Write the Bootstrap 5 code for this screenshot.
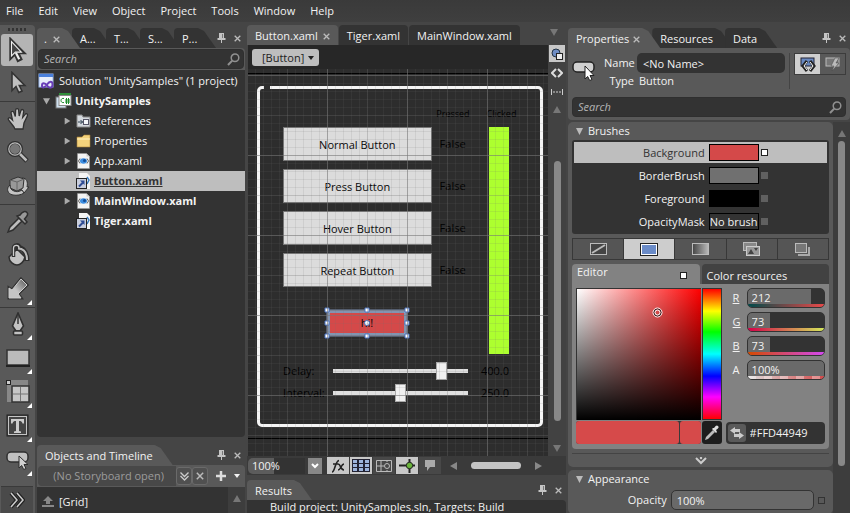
<!DOCTYPE html>
<html lang="en">
<head>
<meta charset="utf-8">
<meta name="viewport" content="width=device-width, initial-scale=1">
<title>UnitySamples</title>
<link href="https://cdn.jsdelivr.net/npm/bootstrap@5.3.0/dist/css/bootstrap.min.css" rel="stylesheet">
<style>
:root{--panel:#595959;--well:#333;--base:#454545;--lite:#bebebe}
body{font:11px/16px "Open Sans","Noto Sans",sans-serif;color:#f2f2f2;background:var(--base);height:100vh;overflow:hidden}
a{color:inherit;text-decoration:none}
button{font:inherit;color:inherit;background:none;border:0;padding:0}
input,select{font:inherit;color:inherit;min-width:0}
svg{display:block;flex:none}
.menubar{height:22px;background:linear-gradient(#3a3a3a,#3f3f3f);padding:0 6px;gap:15px}
.workspace{display:grid;grid-template-columns:35px minmax(0,208fr) minmax(0,319fr) minmax(0,282fr);column-gap:2px;min-height:0}
.workspace>*{min-width:0;min-height:0}
.dock{padding-top:6px}

/* tool strip */
.tools{background:var(--panel);margin-top:3px;border-radius:0 4px 0 0;overflow:hidden}
.grip{height:3px;margin:3px 8px 3px;background:repeating-linear-gradient(90deg,#333 0 2px,transparent 2px 4px)}
.tool{display:flex;align-items:center;justify-content:center;position:relative;height:34px;flex:none}
.tool.on{background:#b4b4b4;border-radius:3px;margin:0 2px 0 1px;height:32px}
.tool.sep{border-top:1px solid #3a3a3a;margin-top:1px}
.tool.more::after{content:"";position:absolute;right:3px;bottom:1px;border:solid transparent;border-width:0 0 5px 5px;border-bottom-color:#fff}
.tool.last{background:#4a4a4a;border-top:1px solid #3a3a3a;margin:9px 2px 0 1px;flex:1 1 auto;height:auto}

/* slanted tabs */
.tabs{height:20px}
.slant{height:20px;padding:2px 20px 0 8px;background:var(--well);border-radius:4px 0 0 0;clip-path:polygon(0 0,calc(100% - 18px) 0,calc(100% - 12px) 3px,100% 100%,0 100%);margin-right:-8px;white-space:nowrap}
.slant.on{background:var(--panel);position:relative;z-index:1}
.short{width:40px;padding-right:0;margin-right:-6px}
.short.dot{width:43px;margin-right:-8px;gap:6px;padding-left:7px}
.short.end{width:42px;margin:0}
.band{background:var(--panel);border-radius:0 4px 0 0;padding:1px}
.find{background:var(--well);border:1px solid #2f2f2f;border-radius:4px;height:20px;padding:0 3px 0 5px}
.find input,.plain{background:none;border:0;outline:0;padding:0;width:100%}
.find input{font-style:italic}
.find input::placeholder{color:#b5b5b5}
.tree{background:var(--well);border-radius:0 0 4px 4px;padding-top:1px}
.node{height:20px;display:flex;align-items:center;white-space:nowrap;gap:5px;padding-left:1px}
.node i{width:7px;height:7px;background:#aaa;clip-path:polygon(10% 0,90% 50%,10% 100%);flex:none}
.node i.down{clip-path:polygon(0 10%,100% 10%,50% 100%)}
.node i.none{visibility:hidden}
.node.top{padding-left:6px}
.node.lvl{padding-left:27px}
.node.top svg,.node.lvl svg{margin-right:-3px}
.node.sel{background:var(--lite);color:#333;text-decoration:underline}
.story{height:22px;padding:1px}
.story .field{background:#484848;border-radius:4px 0 0 4px;color:#9b9b9b;height:20px}
.story .mini{width:16px;height:18px;background:#505050;border:1px solid #6a6a6a;border-radius:3px;display:grid;place-items:center}
.objrow{height:26px;background:var(--well)}
.strip{flex:0 0 17px;background:#3d3d3d;display:flex;flex-direction:column;align-items:center}

/* document area */
.doctabs{padding-top:3px;gap:1px}
.doctab{height:20px;background:var(--well);border-radius:4px 4px 0 0;padding:2px 8px 0}
.doctab.on{background:var(--panel);gap:5px}
.page{padding-left:1px}
.crumbs{height:24px;background:#272727;padding:4px 4px}
.crumb{background:var(--lite);color:#222;border-radius:3px;height:17px;padding:0 5px 0 10px;line-height:16px}
.tri{border:4px solid transparent;border-width:4px 3px 0;border-top-color:currentColor;display:inline-block}
.tri.up{border-width:0 4px 7px;border-bottom-color:#777;border-top-color:transparent}
.tri.dn{border-width:7px 4px 0;border-top-color:#777}
.surface{position:relative;background:#2d2d2d;overflow:hidden;padding:0 5px 0 9px;color:#000}
.surface::after{content:"";position:absolute;inset:0;pointer-events:none;
background:
 repeating-linear-gradient(90deg,transparent 0 79px,rgba(120,120,120,.42) 79px 80px),
 linear-gradient(transparent 79px,rgba(120,120,120,.42) 79px) 0 7px/100% 80px,
 repeating-linear-gradient(90deg,transparent 0 39px,rgba(115,115,115,.2) 39px 40px),
 linear-gradient(transparent 39px,rgba(115,115,115,.2) 39px) 0 7px/100% 40px,
 repeating-linear-gradient(90deg,transparent 0 7px,rgba(110,110,110,.13) 7px 8px),
 linear-gradient(transparent 7px,rgba(110,110,110,.13) 7px) 0 -1px/100% 8px}
.edge{height:1px;background:#000;margin:0 -5px 0 -9px}
.board{position:relative;border:3px solid #f5f5f5;border-radius:5px;margin:12px 0 11px;padding:16px 18px 20px 23px}
.board::before{content:"";position:absolute;left:4px;top:-3px;width:6px;height:3px;background:#2d2d2d}
.heads{font-size:9px;line-height:18px;height:22px}
.heads span:first-child{width:36px;margin-right:5px;text-align:center}
.heads span:last-child{width:46px;text-align:center;padding-left:5px}
.demo{width:77%;height:34px;background:#dcdcdc;border:1px solid #777;color:#070707;line-height:34px}
.gauge{width:46px;padding:0 13px}
.gauge div{background:#adff2f}
.pick{position:relative;width:80px;height:26px;margin:23px 0 18px 44px;background:#d44949;border:3px solid #777;color:#070707;line-height:20px}
.pick svg{position:absolute;left:-6px;top:-6px}
.tunes{padding-top:6px}
.tune{height:22px}
.tune label{width:50px}
.tune output{width:54px;padding-left:13px}
.tune input{flex:1;appearance:none;-webkit-appearance:none;background:none;height:18px;margin:0}
.tune input::-webkit-slider-runnable-track{height:4px;background:#dfdfdf}
.tune input::-webkit-slider-thumb{-webkit-appearance:none;width:11px;height:18px;margin-top:-7px;background:#f0f0f0;border:1px solid #aaa}
.tune input::-moz-range-track{height:4px;background:#dfdfdf}
.side{width:18px;background:#424242}
.side .ic{width:16px;height:17px;display:grid;place-items:center;margin-bottom:2px}
.side .ic.on,.status .ic.on{background:#c8c8c8}
.vbar{width:7px;border-radius:4px;background:#888}
.status{height:19px;background:#3a3a3a;padding:1px 0 1px 1px;gap:1px}
.status .zoom{width:57px;height:16px;background:linear-gradient(90deg,#5c5c5c 26px,var(--well) 26px);border:0;border-radius:5px 0 0 5px;padding:0 4px}
.status .ic{width:22px;height:17px;display:grid;place-items:center;background:#484848}
.status .drop{width:14px;height:16px;background:#888;display:grid;place-items:center;margin:0 4px 0 2px}
.hbar{height:7px;border-radius:4px;background:#c4c4c4;flex:0 0 50px}
.results{margin-top:5px}
.log{background:var(--well);border-radius:0 4px 0 0;padding:0 0 0 23px;white-space:nowrap;height:13px;line-height:14px}

/* properties */
.props{background:var(--panel);border-radius:0 4px 4px 4px;padding:5px 4px 4px 4px;height:72px}
.namebox{background:var(--well);border:0;border-radius:5px;height:20px;padding:0 6px;width:0}
.typ{display:grid;grid-template-columns:30px 1fr;column-gap:3px}
.typ label,.typ span:nth-of-type(odd){text-align:right}
.typ div+span+div{padding-left:2px}
.vr2{width:1px;background:#444}
.duo{border:1px solid #3c3c3c;height:22px}
.duo button{width:25px;display:grid;place-items:center}
.duo .on{background:#cfcfcf}
.cats{margin-top:2px}
.catlist{flex:1 1 0;min-width:0}
.cat{background:var(--panel);border-radius:5px;padding:0 4px}
.cat+.cat{margin-top:3px;padding-bottom:4px}
.cat h2{font-size:11px;line-height:18px;font-weight:400;margin:0;padding-left:4px;gap:5px}
.brushes{background:var(--well);border-radius:3px;padding:2px 2px 0;height:94px}
.brow{display:grid;grid-template-columns:130fr 50px 64fr;column-gap:4px;align-items:center;height:23px;width:100%}
.brow span:first-child{text-align:right}
.brow.on{background:var(--lite);color:#333;height:21px;margin-bottom:1px}
.chip{height:17px;border:1px solid #000;line-height:15px;padding:0;white-space:nowrap;text-align:center}
.c-bg{background:#d44949}.c-bb{background:#707070}.c-fg{background:#000}
.dot7{width:7px;height:7px;background:#606060;margin-left:-2px}
.dot7.w{background:#fff;border:1px solid #222}
.dot7.o{background:none;border:1px solid #333;margin:0 4px 0 0}
.kinds{height:22px;border:1px solid #383838;margin:4px 0 4px}
.kinds button{flex:1;display:grid;place-items:center;background:#555}
.kinds button+button{border-left:1px solid #383838}
.kinds .on{background:#cdcdcd}
.etab{flex:1;height:20px;border-radius:4px 4px 0 0;padding:0 5px;white-space:nowrap}
.etab.on{background:#828282}
.etab.off{background:#424242;padding-top:4px}
.etabs{gap:2px}
.editor{background:#828282;border-radius:0 0 4px 4px;padding:4px 4px 5px 4px}
.picker{display:grid;grid-template-columns:minmax(0,124fr) 20px;grid-template-rows:132px 23px;gap:1px;flex:145 1 0;min-width:0}
.chans{flex:99 1 0;min-width:0}
.field2{position:relative;background:linear-gradient(transparent,#000),linear-gradient(90deg,#fff,#f00);border:1px solid #333;border-width:1px 0 0 1px}
.field2 svg{position:absolute;left:61%;top:14%}
.hue{border:1px solid #333;background:linear-gradient(#f00,#ff0 17%,#0f0 33%,#0ff 50%,#00f 67%,#f0f 83%,#f00)}
.now{background:#d64a4a;border-radius:3px}
.swatches{display:grid;grid-template-columns:103fr 20fr;gap:1px;background:#3a3a3a;border-radius:3px}
.eye{background:#1d1d1d;border-radius:3px;display:grid;place-items:center}
.chan{height:20px;margin-bottom:4px;padding-left:7px}
.chan label{width:14px}
.chan .box{flex:1 1 0;min-width:0;height:20px;border:1px solid #333;border-radius:5px;overflow:hidden;background:linear-gradient(90deg,#6a6a6a var(--fill),#333 var(--fill))}
.chan input{height:15px;padding:3px 4px 0;display:block}
.chan .bar{height:3px}
.r .bar{background:linear-gradient(90deg,#004949,#e84949)}
.g .bar{background:linear-gradient(90deg,#d40049,#d4e85a)}
.b .bar{background:linear-gradient(90deg,#d44900,#d449f0)}
.a .bar{background:repeating-linear-gradient(90deg,rgba(255,255,255,.35) 0 8px,transparent 8px 16px),linear-gradient(90deg,#ddd,#d44949)}
.hex{background:#333;border-radius:4px;height:22px;padding:2px 2px}
.hex button{width:18px;height:18px;background:#5a5a5a;border-radius:3px;display:grid;place-items:center;flex:none}
.fold{height:14px;width:100%;border-top:1px solid #444;margin-top:4px;display:grid;place-items:center}
.oprow{margin-top:2px;gap:4px}
.oprow label{width:100px;text-align:right}
.opac{height:20px;background:#696969;border:1px solid #333;border-radius:5px;padding:0 5px}
</style>
<script src="https://cdn.jsdelivr.net/npm/bootstrap@5.3.0/dist/js/bootstrap.bundle.min.js"></script>
</head>
<body class="d-flex flex-column m-0">
<svg width="0" height="0" class="position-absolute" aria-hidden="true">
 <defs>
  <symbol id="x" viewBox="0 0 7 7"><path d="M.7.7l5.6 5.6M6.3.7L.7 6.3" stroke="#bbb" stroke-width="1.3"/></symbol>
  <symbol id="pin" viewBox="0 0 9 11"><path d="M2 0h5v5h1.500v2H5v3H4V7H.5V5H2z" fill="#c4c4c4"/><path d="M5.500 1v4" stroke="#777"/></symbol>
  <symbol id="mag" viewBox="0 0 13 13"><circle cx="8" cy="4.800" r="3.800" fill="none" stroke="#909090" stroke-width="1.500"/><path d="M5.200 7.600L1 12" stroke="#909090" stroke-width="2"/></symbol>
  <symbol id="xaml" viewBox="0 0 16 16"><path d="M1.500.5h9l3 3v12h-12z" fill="#f4f4f4" stroke="#999" stroke-width=".5"/><path d="M10.500.5v3h3" fill="#ccc"/><path d="M4 5.500L2.500 8 4 10.500M11 5.500L12.500 8 11 10.500" fill="none" stroke="#666"/><ellipse cx="7.500" cy="8" rx="3.500" ry="2.700" fill="#3c8de0"/><circle cx="8.500" cy="7.500" r="1.500" fill="#124b94"/></symbol>
  <symbol id="link" viewBox="0 0 16 16"><path d="M3 0h8l3 3v13H3z" fill="#f4f4f4"/><path d="M11 4l2 3-2 4" fill="none" stroke="#3c7dc0" stroke-width="1.500"/><rect x=".5" y="5.500" width="10" height="10" fill="#c9cedd" stroke="#222"/><path d="M3 13.500L7 9.500" stroke="#2f4c94" stroke-width="2"/><path d="M4 7.500h4.500V12z" fill="#2f4c94"/></symbol>
  <symbol id="arrow" viewBox="0 0 20 24"><path d="M4 1.500v18l4-4 2.800 6 3.200-1.500-2.700-5.500h5.500z" fill="#bfbfbf" stroke="#333" stroke-width="1.600"/></symbol>
 </defs>
</svg>

<nav class="menubar d-flex align-items-center flex-shrink-0" aria-label="Main menu">
 <a href="#">File</a><a href="#">Edit</a><a href="#">View</a><a href="#">Object</a><a href="#">Project</a><a href="#">Tools</a><a href="#">Window</a><a href="#">Help</a>
</nav>

<main class="workspace flex-grow-1">
 <!-- tools -->
 <div class="tools d-flex flex-column" role="toolbar" aria-label="Tools">
  <div class="grip flex-shrink-0"></div>
  <button class="tool on" aria-label="Selection"><svg width="22" height="27" viewBox="0 0 20 24"><path d="M4 1.500v18l4-4 2.800 6 3.200-1.500-2.700-5.500h5.500z" fill="#333" stroke="#333" stroke-width="2"/><path d="M5 4v13l3.500-3.500h5.500z" fill="#444" stroke="#eee"/><path d="M9 14l3 6" stroke="#eee" stroke-width="2"/></svg></button>
  <button class="tool" aria-label="Direct selection"><svg width="20" height="24"><use href="#arrow"/></svg></button>
  <button class="tool sep" aria-label="Pan"><svg width="24" height="24" viewBox="0 0 24 24"><path d="M8 20L2.500 13c-1-1.700.7-2.900 2.300-1.700L6.500 13 5 6c0-2.200 2.600-2.200 3.100 0l1.200 3.500.3-6.300c.2-2.100 2.900-2.100 3 0l.6 5.800 1.700-5.400c.6-1.800 3-1.200 2.800.8l-1 5.900 2.400-3c1.100-1.500 3-.2 2.300 1.600L18 16l-1 6H9z" fill="#c2c2c2" stroke="#303030" stroke-width="1.300"/></svg></button>
  <button class="tool" aria-label="Zoom"><svg width="24" height="24" viewBox="0 0 24 24"><path d="M13 13l8 8" stroke="#2f2f2f" stroke-width="5"/><circle cx="9" cy="9" r="6.500" fill="#777" stroke="#2f2f2f" stroke-width="3"/><circle cx="9" cy="9" r="6.200" fill="none" stroke="#bbb" stroke-width="1.300"/><path d="M14 14l6.500 6.500" stroke="#bbb" stroke-width="2.500"/></svg></button>
  <button class="tool" aria-label="Camera orbit"><svg width="24" height="24" viewBox="0 0 24 24"><path d="M16 4c5 0 6 4 5 9h2l-5 6-4-5 2-.5c1-3 1-5-1-6z" fill="#c4c4c4" stroke="#333"/><path d="M4 6l8-3 6 2-1 9-6 3-7-3z" fill="#999" stroke="#333"/><path d="M4 6l7 2 7-3M11 8v8" stroke="#666" fill="none"/><path d="M4 11c-4 3-3 9 3 10 4 .7 8 0 11-2l-2-3c-3 2-6 2-8 1-3-1-4-3-4-6z" fill="#c4c4c4" stroke="#333"/></svg></button>
  <button class="tool sep" aria-label="Eyedropper"><svg width="24" height="24" viewBox="0 0 24 24"><path d="M2 22l2-5 9-9 3 3-9 9z" fill="#bdbdbd" stroke="#2f2f2f" stroke-width="1.500"/><path d="M11 6l8 8 2-2-2.500-3c3-3 4-5 2.500-6.500S16.500 1 14 5z" fill="#999" stroke="#2f2f2f" stroke-width="1.500"/></svg></button>
  <button class="tool" aria-label="Paint bucket"><svg width="24" height="24" viewBox="0 0 24 24"><path d="M9 5c6-2 12 2 12 13" fill="none" stroke="#2f2f2f" stroke-width="5"/><path d="M3 14l8-8 8 8c-1 5-5 8-8 8s-8-3-8-8z" fill="#c2c2c2" stroke="#2f2f2f" stroke-width="1.500"/><path d="M12 5.500c6 0 9 4 9 11.500" fill="none" stroke="#bbb" stroke-width="2"/><path d="M7.500 14V5c0-4 6-4 6-1" fill="none" stroke="#2f2f2f" stroke-width="3.500"/><path d="M7.500 13V5c0-3.500 5.500-3.500 5.500 0" fill="none" stroke="#ccc" stroke-width="1.300"/></svg></button>
  <button class="tool more" aria-label="Gradient"><svg width="24" height="24" viewBox="0 0 24 24"><defs><linearGradient id="gg" x1="1" y1="0" x2="0" y2="1"><stop stop-color="#555"/><stop offset=".6" stop-color="#c4c4c4"/></linearGradient></defs><path d="M15 2l6 6-9 9 3 4H3V11l3 2z" stroke="#333" stroke-width="3"/><path d="M15 2l6 6-9 9 3 4H3V11l3 2z" fill="url(#gg)" stroke="#ccc"/></svg></button>
  <button class="tool sep more" aria-label="Pen"><svg width="20" height="26" viewBox="0 0 20 26"><path d="M10 1L4.500 14 8 19h4l3.500-5z" fill="#c2c2c2" stroke="#2f2f2f" stroke-width="1.600"/><path d="M10 2v10" stroke="#333" stroke-width="1.500"/><rect x="5.500" y="19" width="9" height="4" rx="1" fill="#c2c2c2" stroke="#2f2f2f" stroke-width="1.600"/></svg></button>
  <button class="tool more" aria-label="Rectangle"><svg width="24" height="18"><rect x="1" y="1" width="22" height="15" fill="#bbb" stroke="#333" stroke-width="1.500"/><path d="M0 17h24" stroke="#222" stroke-width="2"/></svg></button>
  <button class="tool more" aria-label="Grid"><svg width="24" height="24" viewBox="0 0 24 24"><path d="M5 0h17v6H5zM1 5h5v17H1z" fill="#888"/><rect x=".5" y=".5" width="4" height="4" fill="#ccc" stroke="#222"/><rect x="6" y="6" width="17" height="16" fill="#c6c6c6" stroke="#333" stroke-width="1.500"/><path d="M14.500 7v14M7 14h15" stroke="#777"/></svg></button>
  <button class="tool more" aria-label="Text"><svg width="24" height="24" viewBox="0 0 24 24"><rect x="1" y="1" width="21" height="21" fill="#444" stroke="#222"/><rect x="2.500" y="2.500" width="18" height="18" fill="none" stroke="#c4c4c4"/><path d="M5 5h13v4.500h-1.500C16 7.500 15 7 13 7v10l2 .5V19H8v-1.500l2-.5V7c-2 0-3 .5-3.500 2.500H5z" fill="#ccc"/></svg></button>
  <button class="tool more" aria-label="Button"><svg width="24" height="22" viewBox="0 0 24 22"><rect x="1" y="3" width="21" height="10" rx="4" fill="#c0c0c0" stroke="#2f2f2f" stroke-width="1.500"/><path d="M13 7v12l2.700-2.500 2 4 2.300-1-2-4H22z" fill="#d0d0d0" stroke="#2f2f2f"/></svg></button>
  <button class="tool last" aria-label="More"><svg width="16" height="18" viewBox="0 0 16 18" fill="none"><path d="M2 2l6 7-6 7M8 2l6 7-6 7" stroke="#222" stroke-width="4"/><path d="M2 2l6 7-6 7M8 2l6 7-6 7" stroke="#ccc" stroke-width="1.500"/></svg></button>
 </div>

 <!-- projects -->
 <section class="dock d-flex flex-column">
  <div class="tabs d-flex flex-shrink-0">
   <button class="slant on short dot d-flex align-items-center">.<svg width="7" height="7"><use href="#x"/></svg></button>
   <button class="slant short text-start">A...</button><button class="slant short text-start">T...</button><button class="slant short text-start">S...</button><button class="slant short end text-start">P...</button>
   <span class="d-flex align-items-center gap-2 ms-auto pe-1"><svg width="9" height="11"><use href="#pin"/></svg><svg width="7" height="7"><use href="#x"/></svg></span>
  </div>
  <div class="band flex-shrink-0"><div class="find d-flex align-items-center"><input type="search" aria-label="Search projects" placeholder="Search"><svg width="13" height="13"><use href="#mag"/></svg></div></div>
  <div class="tree flex-grow-1">
   <a href="#" class="node"><svg width="16" height="16" viewBox="0 0 16 16"><rect x="1" y="1" width="14" height="13" fill="#e8eefb" stroke="#9bb8ea"/><rect x="1" y="1" width="14" height="3" fill="#4a80dc"/><path d="M4 12.500c0-3 3-3 5 0s5.500 3 5.500-1-3-3.500-5.500 0-5 4-5 1" fill="none" stroke="#6a3fb8" stroke-width="2"/></svg>Solution "UnitySamples" (1 project)</a>
   <a href="#" class="node top fw-bold"><i class="down"></i><svg width="18" height="16" viewBox="0 0 18 16"><path d="M4 0h12v9H4z" fill="#2f8f3a"/><rect x="1" y="4" width="10" height="11" fill="#cfe0ef" stroke="#777"/><rect x="4" y="2.500" width="12" height="10" fill="#fff" stroke="#888"/><path d="M9 5.500c-4-1-4 5 0 4M11.500 5v6M13.500 5v6M10 7h5M10 9h5" stroke="#1c8a2a" fill="none"/></svg>UnitySamples</a>
   <a href="#" class="node lvl"><i></i><svg width="16" height="16" viewBox="0 0 16 16"><path d="M1 2h5l1 2h7v10H1z" fill="#d4d8dd" stroke="#888"/><rect x="7.500" y="6.500" width="5" height="5" fill="#f5f7fa" stroke="#556"/><path d="M2 9h5M4.500 7l2 2-2 2" stroke="#345" fill="none"/></svg><span>References</span></a>
   <a href="#" class="node lvl"><i></i><svg width="16" height="16" viewBox="0 0 16 16"><path d="M1 4h5l2-2h6v12H1z" fill="#f3d27c" stroke="#a88238" stroke-width=".6"/><path d="M1 6h13" stroke="#fff3c4"/></svg><span>Properties</span></a>
   <a href="#" class="node lvl"><i></i><svg width="16" height="16"><use href="#xaml"/></svg><span>App.xaml</span></a>
   <a href="#" class="node lvl sel fw-bold"><i class="none"></i><svg width="16" height="16"><use href="#link"/></svg><span>Button.xaml</span></a>
   <a href="#" class="node lvl fw-bold"><i></i><svg width="16" height="16"><use href="#xaml"/></svg><span>MainWindow.xaml</span></a>
   <a href="#" class="node lvl fw-bold"><i class="none"></i><svg width="16" height="16"><use href="#link"/></svg><span>Tiger.xaml</span></a>
  </div>
  <div class="tabs d-flex mt-2 flex-shrink-0">
   <button class="slant on">Objects and Timeline</button>
   <span class="d-flex align-items-center gap-2 ms-auto pe-1"><svg width="9" height="11"><use href="#pin"/></svg><svg width="7" height="7"><use href="#x"/></svg></span>
  </div>
  <div class="band story d-flex align-items-center flex-shrink-0">
   <div class="field flex-grow-1 d-flex align-items-center justify-content-end pe-2"><span class="pe-1">(No Storyboard open)</span></div>
   <button class="mini" aria-label="Choose storyboard"><svg width="9" height="9" viewBox="0 0 9 9"><path d="M.5.5l4 4 4-4M.5 4l4 4 4-4" fill="none" stroke="#ccc" stroke-width="1.300"/></svg></button>
   <button class="mini" aria-label="Close storyboard"><svg width="8" height="8"><use href="#x"/></svg></button>
   <button class="ms-2 me-2" aria-label="New storyboard"><svg width="10" height="10"><path d="M5 0v10M0 5h10" stroke="#ddd" stroke-width="2.500"/></svg></button>
   <span class="tri me-1"></span>
  </div>
  <div class="objrow d-flex flex-shrink-0">
   <div class="flex-grow-1 d-flex align-items-center pt-1 ps-1"><svg class="me-1" width="14" height="12" viewBox="0 0 14 12"><path d="M7 0l5 5H9v3H5V5H2z" fill="#888"/><path d="M1 10h12" stroke="#888" stroke-width="2"/></svg>[Grid]</div>
   <div class="strip pt-2"><span class="tri up"></span></div>
  </div>
 </section>

 <!-- document -->
 <section class="d-flex flex-column">
  <div class="doctabs d-flex flex-shrink-0"><button class="doctab on d-flex align-items-center">Button.xaml<svg width="7" height="7"><use href="#x"/></svg></button><button class="doctab">Tiger.xaml</button><button class="doctab">MainWindow.xaml</button><span class="tri dn ms-auto me-2 mt-1"></span></div>
  <div class="d-flex flex-grow-1">
   <div class="page flex-grow-1 d-flex flex-column">
    <div class="crumbs"><button class="crumb d-flex align-items-center gap-1">[Button]<span class="tri"></span></button></div>
    <div class="surface flex-grow-1">
     <div class="edge mt-1"></div>
     <div class="board">
      <div class="heads d-flex justify-content-end"><span>Pressed</span><span>Clicked</span></div>
      <div class="d-flex">
       <div class="flex-grow-1">
        <div class="d-flex align-items-center gap-2 mb-2"><button class="demo">Normal Button</button><span>False</span></div>
        <div class="d-flex align-items-center gap-2 mb-2"><button class="demo">Press Button</button><span>False</span></div>
        <div class="d-flex align-items-center gap-2 mb-2"><button class="demo">Hover Button</button><span>False</span></div>
        <div class="d-flex align-items-center gap-2"><button class="demo">Repeat Button</button><span>False</span></div>
        <button class="pick d-block">hi!<svg width="86" height="32" viewBox="0 0 86 32"><rect x="5" y="5" width="76" height="22" fill="none" stroke="#8fb2ea"/><path d="M3 3h80v26H3z" fill="none" stroke="#7c8fb0"/><g fill="#fff" stroke="#4a74c4"><path d="M1 1h4v4H1zM41 1h4v4h-4zM81 1h4v4h-4zM1 14h4v4H1zM81 14h4v4h-4zM1 27h4v4H1zM41 27h4v4h-4zM81 27h4v4h-4z"/><circle cx="43" cy="16" r="2.500"/></g></svg></button>
       </div>
       <div class="gauge d-flex"><div class="flex-grow-1"></div></div>
      </div>
      <div class="tunes">
       <div class="tune d-flex align-items-center"><label for="delay">Delay:</label><input id="delay" type="range" max="480" value="400"><output for="delay">400.0</output></div>
       <div class="tune d-flex align-items-center"><label for="interval">Interval:</label><input id="interval" type="range" max="500" value="250"><output for="interval">250.0</output></div>
      </div>
     </div>
     <div class="edge"></div>
    </div>
   </div>
   <div class="side d-flex flex-column align-items-center">
    <button class="ic on" aria-label="Design view"><svg width="12" height="12"><circle cx="5" cy="5" r="4" fill="#6f8dc4" stroke="#234"/><rect x="5.500" y="5.500" width="6" height="6" fill="#eee" stroke="#222"/></svg></button>
    <button class="ic" aria-label="XAML view"><svg width="12" height="10" fill="none"><path d="M5 1L1 5l4 4M7 1l4 4-4 4" stroke="#ddd" stroke-width="2"/></svg></button>
    <button class="ic" aria-label="Split view"><svg width="12" height="6"><path d="M.5 0v6M11.500 0v6" stroke="#ccc"/><path d="M2 3h8" stroke="#ccc" stroke-dasharray="2 1"/></svg></button>
    <span class="tri up mt-1"></span>
    <div class="vbar flex-grow-1 mt-5 mb-4"></div>
    <span class="tri dn mb-1"></span>
   </div>
  </div>
  <div class="status d-flex align-items-center flex-shrink-0">
   <input class="zoom" type="text" aria-label="Zoom" value="100%"><button class="drop" aria-label="Zoom levels"><svg width="8" height="6" fill="none"><path d="M1 1l3 3 3-3" stroke="#fff" stroke-width="2"/></svg></button>
   <button class="ic on" aria-label="Effects"><svg width="16" height="14" fill="none" stroke="#222" stroke-width="1.600"><path d="M2 13c3 0 3-11 7-11.500M3 5h5M8 5c3 0 2 6 6 6M14 5c-3 0-3 6-6 6"/></svg></button>
   <button class="ic on" aria-label="Show grid"><svg width="18" height="13"><rect width="18" height="13" fill="#223"/><path d="M1 1h4v3H1zM7 1h4v3H7zM13 1h4v3h-4zM1 5h4v3H1zM7 5h4v3H7zM13 5h4v3h-4zM1 9h4v3H1zM7 9h4v3H7zM13 9h4v3h-4z" fill="#9db4dc"/></svg></button>
   <button class="ic" aria-label="Snap to grid"><svg width="16" height="12" fill="none" stroke="#bbb"><path d="M.5.5h15v11H.5zM5 0v12M0 6h8M11 0v2M11 10v2"/><circle cx="11" cy="6" r="2.500"/></svg></button>
   <button class="ic on" aria-label="Snaplines"><svg width="16" height="14"><path d="M0 6.500h16M10.500 0v14" stroke="#222" stroke-width="2"/><circle cx="10.500" cy="6.500" r="3.200" fill="#6ab53a" stroke="#222"/></svg></button>
   <button class="ic" aria-label="Annotations"><svg width="12" height="11"><path d="M1 0h10v7H6l-3 4V7H1z" fill="#aaa"/></svg></button>
   <div class="d-flex align-items-center justify-content-between flex-grow-1 px-2 me-3"><svg width="7" height="8"><path d="M7 0v8L0 4z" fill="#888"/></svg><div class="hbar"></div><svg width="7" height="8"><path d="M0 0v8l7-4z" fill="#888"/></svg></div>
  </div>
  <div class="tabs results d-flex flex-shrink-0"><button class="slant on">Results</button><span class="d-flex align-items-center gap-2 ms-auto pe-1"><svg width="9" height="11"><use href="#pin"/></svg><svg width="7" height="7"><use href="#x"/></svg></span></div>
  <div class="log flex-shrink-0">Build project: UnitySamples.sln, Targets: Build</div>
 </section>

 <!-- properties -->
 <section class="dock d-flex flex-column">
  <div class="tabs d-flex flex-shrink-0"><button class="slant on d-flex align-items-center gap-1">Properties<svg width="7" height="7"><use href="#x"/></svg></button><button class="slant">Resources</button><button class="slant">Data</button><span class="d-flex align-items-center gap-2 ms-auto pe-1"><svg width="9" height="11"><use href="#pin"/></svg><svg width="7" height="7"><use href="#x"/></svg></span></div>
  <div class="props flex-shrink-0">
   <div class="d-flex">
    <svg class="mt-2" width="24" height="22" viewBox="0 0 24 22"><rect x="1" y="1" width="21" height="10" rx="4" fill="#d0d0d0" stroke="#222" stroke-width="1.500"/><path d="M13 5v13l2.700-2.500 2 4 2.300-1-2-4H22z" fill="#fff" stroke="#222"/></svg>
    <div class="typ flex-grow-1 ms-2 align-items-center">
     <label for="nm">Name</label><div class="d-flex"><input id="nm" class="namebox flex-grow-1" type="text" value="&lt;No Name&gt;"></div>
     <span>Type</span><div>Button</div>
    </div>
    <div class="vr2 mx-1"></div>
    <div class="duo d-flex"><button class="on" aria-label="Properties view"><svg width="16" height="15" viewBox="0 0 16 15"><rect x="1" y="1" width="13" height="8" fill="#6888c0" stroke="#223"/><path d="M7 4L3 9l4 5M10 4l4 5-4 5" fill="none" stroke="#222" stroke-width="3"/><path d="M7 5L4 9l3 4M10 5l3 4-3 4" fill="none" stroke="#fff"/></svg></button><button aria-label="Events view"><svg width="16" height="15" viewBox="0 0 16 15"><rect x="1" y="1" width="13" height="8" fill="#777" stroke="#bbb"/><path d="M10 1L6 9h3l-2 5 7-8h-3l3-5z" fill="#bbb" stroke="#444" stroke-width=".5"/></svg></button></div>
   </div>
   <div class="find d-flex align-items-center mt-2"><input type="search" aria-label="Search properties" placeholder="Search"><svg width="13" height="13"><use href="#mag"/></svg></div>
  </div>
  <div class="cats d-flex flex-grow-1">
   <div class="catlist">
    <div class="cat">
     <h2 class="d-flex align-items-center"><svg width="7" height="7"><path d="M0 0h7L3.500 7z" fill="#bbb"/></svg>Brushes</h2>
     <div class="brushes">
      <button class="brow on"><span>Background</span><span class="chip c-bg"></span><span class="dot7 w"></span></button>
      <button class="brow"><span>BorderBrush</span><span class="chip c-bb"></span><span class="dot7"></span></button>
      <button class="brow"><span>Foreground</span><span class="chip c-fg"></span><span class="dot7"></span></button>
      <button class="brow"><span>OpacityMask</span><span class="chip">No brush</span><span class="dot7"></span></button>
     </div>
     <div class="kinds d-flex">
      <button aria-label="No brush"><svg width="17" height="12"><rect x=".5" y=".5" width="16" height="11" fill="#444" stroke="#bbb"/><path d="M2 10L15 2" stroke="#bbb" stroke-width="2"/></svg></button>
      <button class="on" aria-label="Solid color brush"><svg width="18" height="13"><rect x=".5" y=".5" width="17" height="12" fill="#fff" stroke="#222"/><rect x="2" y="2" width="14" height="9" fill="#6a8bc8"/></svg></button>
      <button aria-label="Gradient brush"><svg width="17" height="12"><defs><linearGradient id="g2"><stop stop-color="#444"/><stop offset="1" stop-color="#bbb"/></linearGradient></defs><rect x=".5" y=".5" width="16" height="11" fill="url(#g2)" stroke="#bbb"/></svg></button>
      <button aria-label="Tile brush"><svg width="17" height="14"><rect x=".5" y=".5" width="13" height="8" fill="#888" stroke="#bbb"/><rect x="3.500" y="4.500" width="13" height="9" fill="#999" stroke="#ccc"/><path d="M5 12l3-5 3 5zM11 6l2 3 2-3z" fill="#444"/></svg></button>
      <button aria-label="Brush resources"><svg width="15" height="13"><path d="M3 12h11V4" stroke="#aaa" fill="none" stroke-width="2"/><rect x=".5" y=".5" width="11" height="9" fill="#777" stroke="#bbb"/></svg></button>
     </div>
     <div class="etabs d-flex"><button class="etab on d-flex justify-content-between"><span>Editor</span><span class="dot7 w mt-2 me-2"></span></button><button class="etab off text-start">Color resources</button></div>
     <div class="editor d-flex gap-1">
      <div class="picker">
       <div class="field2"><svg width="11" height="11" viewBox="0 0 11 11" fill="none"><circle cx="5.500" cy="5.500" r="4.500" stroke="#fff"/><circle cx="5.500" cy="5.500" r="3.500" stroke="#222"/><circle cx="5.500" cy="5.500" r="2.500" stroke="#fff"/></svg></div>
       <div class="hue"></div>
       <div class="swatches"><div class="now"></div><div class="now"></div></div>
       <button class="eye" aria-label="Color eyedropper"><svg width="16" height="16" viewBox="0 0 16 16"><path d="M1 15l1-3 7-7 2 2-7 7z" fill="#bbb"/><path d="M8 4l4 4 1-1-1-2c3-2 3-3 2-4s-2-1-4 2L9 3z" fill="#ddd"/></svg></button>
      </div>
      <div class="chans d-flex flex-column">
       <div class="chan r d-flex align-items-center" style="--fill:83%"><label for="cr"><u>R</u></label><div class="box"><input id="cr" class="plain" type="text" value="212"><div class="bar"></div></div></div>
       <div class="chan g d-flex align-items-center" style="--fill:29%"><label for="cg"><u>G</u></label><div class="box"><input id="cg" class="plain" type="text" value="73"><div class="bar"></div></div></div>
       <div class="chan b d-flex align-items-center" style="--fill:29%"><label for="cb"><u>B</u></label><div class="box"><input id="cb" class="plain" type="text" value="73"><div class="bar"></div></div></div>
       <div class="chan a d-flex align-items-center" style="--fill:100%"><label for="ca">A</label><div class="box"><input id="ca" class="plain" type="text" value="100%"><div class="bar"></div></div></div>
       <div class="hex d-flex align-items-center gap-1 mt-auto"><button aria-label="Swap colors"><svg width="14" height="12"><path d="M5 0v2h5v3H5v2L0 3.500zM9 5v2H4v3h5v2l5-3.500z" fill="#ccc"/></svg></button><input class="plain" type="text" aria-label="Hex value" value="#FFD44949"></div>
      </div>
     </div>
     <button class="fold" aria-label="Show more"><svg width="12" height="8" fill="none"><path d="M1 1l5 5 5-5" stroke="#ccc" stroke-width="2"/><circle cx="6" cy="1" r="1.200" fill="#ccc"/></svg></button>
    </div>
    <div class="cat">
     <h2 class="d-flex align-items-center"><svg width="7" height="7"><path d="M0 0h7L3.500 7z" fill="#bbb"/></svg>Appearance</h2>
     <div class="oprow d-flex align-items-center"><label for="op">Opacity</label><input id="op" class="opac flex-grow-1" type="text" value="100%"><span class="dot7 o"></span></div>
    </div>
   </div>
   <div class="strip"><span class="tri up mt-2"></span><div class="vbar mt-1 mb-5 flex-grow-1"></div></div>
  </div>
 </section>
</main>
</body>
</html>
